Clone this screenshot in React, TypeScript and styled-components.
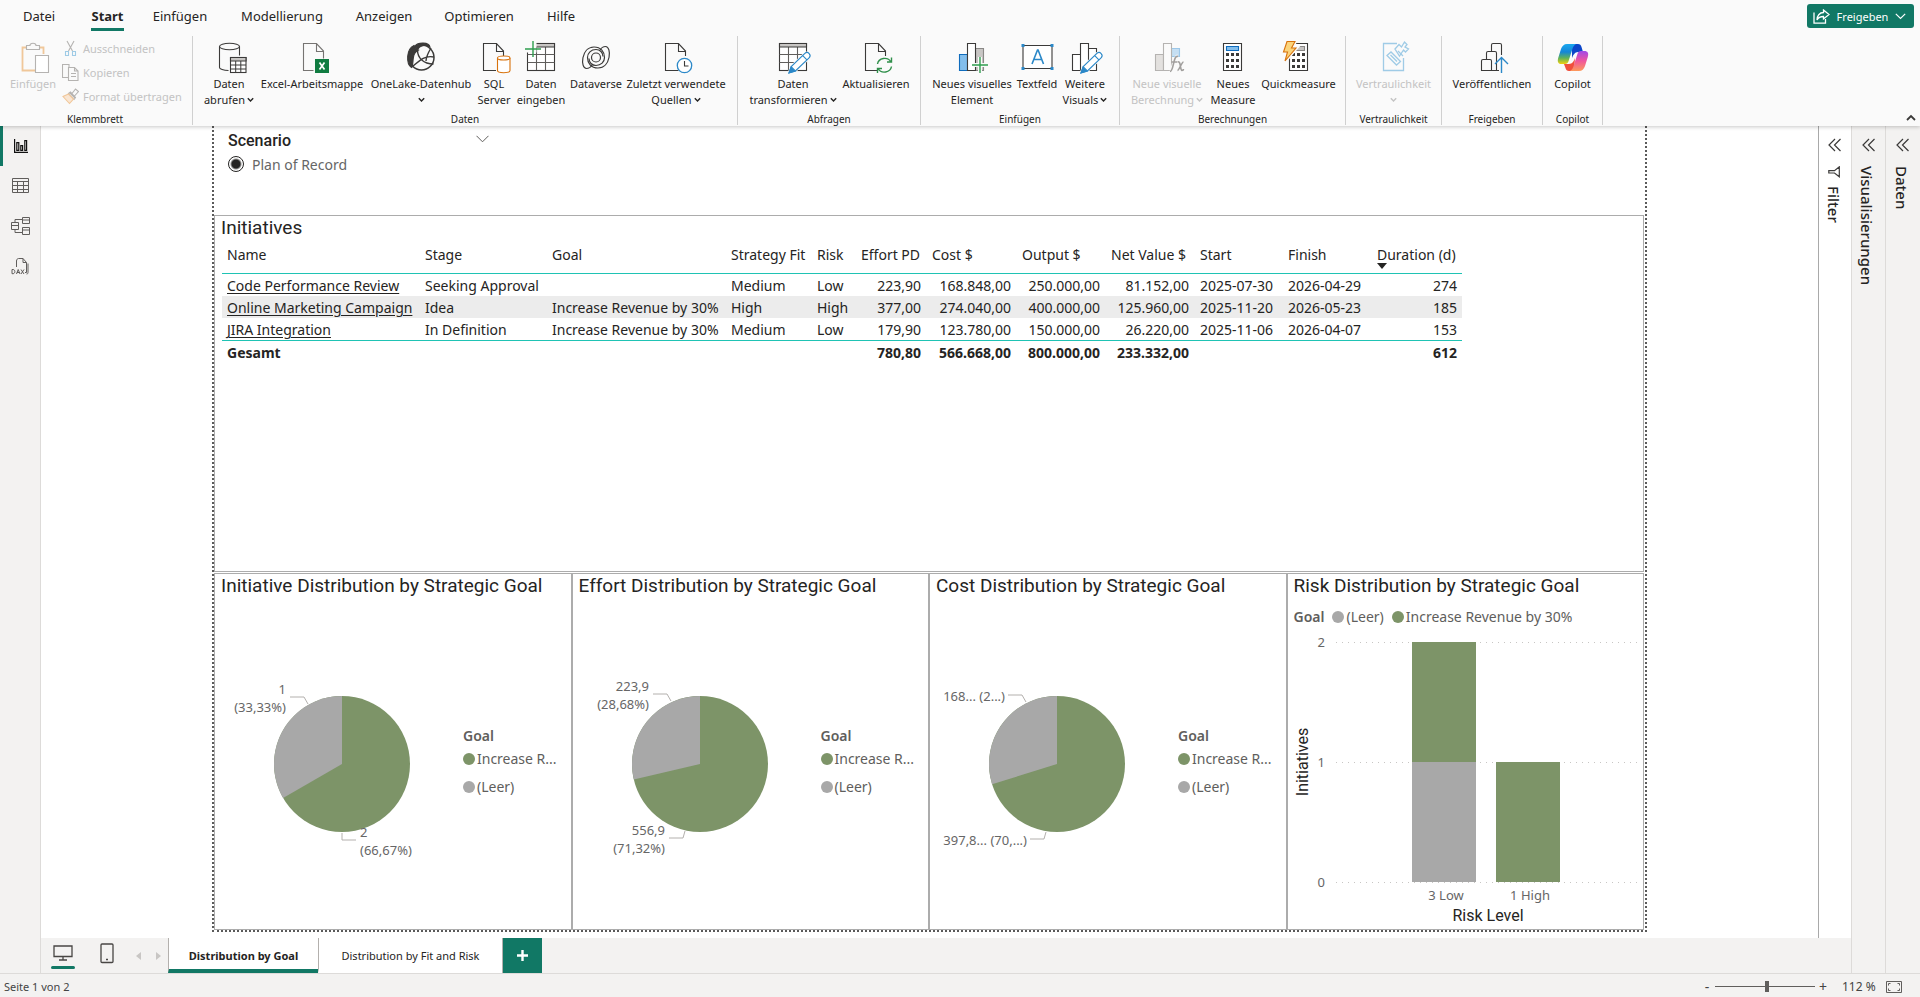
import React from "react";
import styled, { createGlobalStyle } from "styled-components";

const ui = `"Noto Sans", "Open Sans", sans-serif`;
const din = `Roboto, "Open Sans", sans-serif`;
const green = "#7d9468";
const gray = "#a8a8a8";
const brand = "#117865";

const GlobalStyle = createGlobalStyle`
  *, *::before, *::after { box-sizing: border-box; }
  html, body, #root { height: 100%; }
  body { margin: 0; font-family: ${ui}; font-size: 12px; color: #252423; background: #fff; }
  button { font: inherit; color: inherit; background: none; border: 0; padding: 0; margin: 0; cursor: pointer; }
  button:disabled { cursor: default; }
  h2 { margin: 0; }
`;

const Shell = styled.div`
  display: flex;
  flex-direction: column;
  height: 100%;
  overflow: hidden;
`;

/* ---------- ribbon ---------- */

const Ribbon = styled.header`
  position: relative;
  z-index: 2;
  flex: none;
  background: #fafafa;
  box-shadow: 0 1px 4px rgba(0, 0, 0, 0.22);
`;

const MenuRow = styled.div`
  display: flex;
  align-items: center;
  justify-content: space-between;
  height: 32px;
  padding: 0 6px 0 7px;
`;

const Menu = styled.nav`
  display: flex;
`;

const MenuItem = styled.button<{ $w: number; $active?: boolean }>`
  display: flex;
  justify-content: center;
  width: ${(p) => p.$w}px;
  height: 32px;
  padding-top: 7px;
  font-size: 13px;
  line-height: 18px;
  white-space: nowrap;
  font-weight: ${(p) => (p.$active ? 700 : 400)};

  span {
    height: 24px;
    border-bottom: 3px solid ${(p) => (p.$active ? brand : "transparent")};
  }
`;

const ShareButton = styled.button`
  display: flex;
  align-items: center;
  justify-content: space-between;
  width: 107px;
  height: 24px;
  padding: 0 8px 0 6px;
  border-radius: 3px;
  background: ${brand};
  color: #fff;
  font-size: 11px;
`;

const Groups = styled.div`
  display: flex;
  height: 94px;
  padding: 4px 0 1px;
`;

const Group = styled.section`
  display: flex;
  flex-direction: column;
  justify-content: space-between;
  padding: 0 8px;
  border-right: 1px solid #d0d0d0;
`;

const ClipGroup = styled(Group)`
  width: 193px;
  padding: 0 8px 0 6px;
`;

const GroupItems = styled.div`
  display: flex;
  padding-top: 6px;
`;

const GroupLabel = styled.div`
  font-size: 10px;
  line-height: 11px;
  text-align: center;
  white-space: nowrap;
`;

const Tool = styled.button<{ $w: number }>`
  display: flex;
  flex-direction: column;
  align-items: center;
  width: ${(p) => p.$w}px;
  height: 66px;
  font-size: 11px;
  line-height: 16px;
  white-space: nowrap;

  &:disabled {
    color: #c3c3c3;
  }

  & > svg {
    flex: none;
    width: 36px;
    height: 32px;
    margin-bottom: 2px;
    overflow: visible;
  }
`;

const ToolLine = styled.span`
  display: flex;
  align-items: center;
  gap: 2px;
  height: 16px;
`;

const ClipList = styled.div`
  display: flex;
  flex-direction: column;
  margin: -6px 0 0 2px;
`;

const ClipButton = styled.button`
  display: flex;
  align-items: center;
  gap: 4px;
  height: 24px;
  font-size: 11px;
  white-space: nowrap;

  &:disabled {
    color: #c3c3c3;
  }
`;

const Collapse = styled.button`
  display: flex;
  align-items: flex-end;
  margin: 0 4px 4px auto;
`;

/* ---------- body ---------- */

const Middle = styled.div`
  display: flex;
  flex: 1;
  min-height: 0;
`;

const Side = styled.nav`
  flex: none;
  width: 41px;
  background: #f3f2f1;
  border-right: 1px solid #dddbd9;
`;

const SideButton = styled.button<{ $active?: boolean }>`
  display: flex;
  align-items: center;
  justify-content: center;
  width: 40px;
  height: 40px;
  padding-right: 2px;
  border-left: 3px solid ${(p) => (p.$active ? brand : "transparent")};
`;

const Center = styled.div`
  display: flex;
  flex: 1;
  flex-direction: column;
  min-width: 0;
`;

const Work = styled.div`
  display: flex;
  flex: 1;
  min-height: 0;
`;

const Stage = styled.main`
  flex: 1;
  display: flex;
  min-width: 0;
  padding: 0 171px 6px;
`;

const Report = styled.div`
  flex: 1;
  display: flex;
  flex-direction: column;
  min-width: 0;
  border: 2px dotted #5a5a5a;
  border-top: 0;
`;

const Slicer = styled.fieldset`
  flex: none;
  width: 283px;
  height: 89px;
  margin: 0;
  padding: 4px 8px 0 14px;
  border: 0;
`;

const SlicerHead = styled.div`
  display: flex;
  align-items: center;
  justify-content: space-between;
  height: 20px;
  font-family: ${din};
  font-size: 16px;
  font-weight: 500;

  svg { margin-bottom: 2px; }
`;

const RadioLabel = styled.label`
  display: flex;
  align-items: center;
  gap: 8px;
  height: 28px;
  font-size: 14px;
  color: #666;

  input {
    appearance: none;
    width: 16px;
    height: 16px;
    margin: 0;
    border: 1px solid #252423;
    border-radius: 50%;
    background: radial-gradient(circle, #252423 0 4px, #fff 6px);
  }
`;

const Visual = styled.section`
  display: flex;
  flex-direction: column;
  min-width: 0;
  border: 1px solid #acacac;
`;

const TableVisual = styled(Visual)`
  flex: 1;
  margin: 0 1px 1px 0;
  min-height: 0;
`;

const Title = styled.h2`
  flex: none;
  padding-left: 6px;
  font-family: ${din};
  font-size: 19px;
  line-height: 24px;
  font-weight: 400;
  white-space: nowrap;
`;

const Table = styled.table`
  width: 1240px;
  margin-left: 7px;
  table-layout: fixed;
  border-collapse: separate;
  border-spacing: 0;
  font-size: 14px;
  line-height: 20px;
  white-space: nowrap;

  th, td { padding: 2px 5px 0 6px; height: 22px; text-align: left; font-weight: 400; }
  thead th { height: 34px; padding-top: 5px; vertical-align: top; border-bottom: 1px solid #1fc3b4; }
  tbody tr:nth-child(2) { background: #ececec; }
  tbody tr:last-child td { border-bottom: 1px solid #1fc3b4; height: 23px; }
  tfoot th, tfoot td { font-weight: 700; }
  th:first-child, td:first-child { padding-left: 5px; }
  a { color: inherit; text-underline-offset: 2px; }
  th:last-child { position: relative; text-align: right; padding-right: 7px; }
`;

const Num = styled.td`
  && { text-align: right; }
`;

const SortMark = styled.span`
  position: absolute;
  left: 6px;
  bottom: 4px;
  border: 5px solid transparent;
  border-top: 6px solid #252423;
  border-bottom: 0;
`;

const Charts = styled.div`
  flex: none;
  display: grid;
  grid-template-columns: repeat(4, 1fr);
  height: 357px;
  margin-right: 1px;
`;

const PieBody = styled.div`
  display: flex;
  flex: 1;
  align-items: center;
`;

const PieSvg = styled.svg`
  flex: none;
  width: 248px;
  height: 200px;

  text { font-size: 13px; fill: #666; font-family: ${ui}; }
`;

const PieLegend = styled.ul`
  flex: 1;
  min-width: 0;
  margin: 0;
  padding: 1px 8px 0 0;
  list-style: none;
  color: #605e5c;
  font-size: 14px;
  line-height: 18px;
`;

const LegendTitle = styled.li`
  font-weight: 600;
`;

const LegendItem = styled.li<{ $color: string }>`
  display: flex;
  align-items: center;
  gap: 2px;
  height: 28px;
  white-space: nowrap;

  &::before {
    content: "";
    flex: none;
    width: 12px;
    height: 12px;
    border-radius: 50%;
    background: ${(p) => p.$color};
  }
`;

const BarLegend = styled.ul`
  display: flex;
  align-items: center;
  gap: 8px;
  height: 28px;
  margin: 0 0 4px;
  padding: 9px 6px 0;
  list-style: none;
  color: #605e5c;
  font-size: 14px;
`;

const BarSvg = styled.svg`
  width: 355px;
  height: 298px;
  flex: none;

  text { font-family: ${ui}; font-size: 13px; fill: #666; }
  .axis { font-family: ${din}; font-size: 16px; fill: #252423; }
`;

/* ---------- panes ---------- */

const Pane = styled.aside<{ $w: number; $white?: boolean }>`
  flex: none;
  display: flex;
  flex-direction: column;
  align-items: center;
  width: ${(p) => p.$w}px;
  padding: 12px 1px 0 0;
  background: ${(p) => (p.$white ? "#fff" : "#f3f2f1")};
  border-left: 1px solid ${(p) => (p.$white ? "#a9a9a9" : "#dddbd9")};
`;

const PaneTitle = styled.span`
  display: flex;
  align-items: center;
  gap: 8px;
  margin: 14px 2px 0 0;
  writing-mode: vertical-rl;
  font-size: 15px;
  line-height: 20px;
  font-weight: 500;
`;

/* ---------- bottom ---------- */

const PageBar = styled.div`
  flex: none;
  display: flex;
  height: 35px;
  background: #f3f2f1;
`;

const LayoutButton = styled.button<{ $active?: boolean; $w: number }>`
  display: flex;
  flex-direction: column;
  align-items: center;
  justify-content: flex-end;
  gap: 2px;
  width: ${(p) => p.$w}px;
  padding-bottom: 4px;

  &::after {
    content: "";
    width: 24px;
    height: 3px;
    border-radius: 2px;
    background: ${(p) => (p.$active ? brand : "transparent")};
  }
`;

const Pager = styled.button`
  width: 20px;
  color: #c8c6c4;
`;

const PageTab = styled.button<{ $w: number; $active?: boolean }>`
  width: ${(p) => p.$w}px;
  background: #fff;
  border-left: 1px solid #b3b0ad;
  border-bottom: 4px solid ${(p) => (p.$active ? brand : "#fff")};
  font-size: 11px;
  font-weight: ${(p) => (p.$active ? 700 : 400)};
  padding-top: 4px;
`;

const AddPage = styled.button`
  display: flex;
  align-items: center;
  justify-content: center;
  width: 40px;
  background: ${brand};
  border-left: 1px solid #b3b0ad;
`;

const Status = styled.footer`
  flex: none;
  display: flex;
  align-items: center;
  justify-content: space-between;
  height: 24px;
  padding: 2px 18px 0 4px;
  background: #f3f2f1;
  border-top: 1px solid #dddbd9;
  font-size: 11px;
  color: #444;
`;

const ZoomBox = styled.div`
  display: flex;
  align-items: center;
  gap: 4px;
  font-size: 12px;

  button { width: 8px; font-size: 14px; line-height: 16px; }
  output { width: 34px; margin: 0 6px 0 11px; white-space: nowrap; }
`;

const ZoomRange = styled.input`
  appearance: none;
  width: 100px;
  height: 12px;
  margin: 0;
  background: linear-gradient(#605e5c, #605e5c) center / 100% 1px no-repeat;

  &::-webkit-slider-thumb {
    appearance: none;
    width: 4px;
    height: 11px;
    background: #605e5c;
  }
`;

/* ---------- icons ---------- */

const K = "#3b3a39";

const Chev = ({ color = "currentColor" }: { color?: string }) => (
  <svg width="7" height="6" viewBox="0 0 7 6" fill="none" stroke={color} strokeWidth="1.4">
    <path d="M.8 1.2 3.5 4 6.2 1.2" />
  </svg>
);

const BigIcon = ({ children }: { children: React.ReactNode }) => (
  <svg viewBox="0 0 36 32" fill="none" stroke={K} strokeWidth="1.1">
    {children}
  </svg>
);

const Doc = ({ x = 7.5 }: { x?: number }) => (
  <g transform={`translate(${x} 1.5)`}>
    <path d="M13 27H0V0h13l7 7.500v5M13 0v8h7" />
  </g>
);

const Pencil = () => (
  <g stroke="#2b88c8" transform="translate(14 31) rotate(-44)">
    <path fill="#fff" stroke="#fafafa" strokeWidth="2.500" d="M0 0 6-3h19a3 3 0 0 1 0 6H6z" />
    <path fill="#fff" d="M0 0 6-3h19a3 3 0 0 1 0 6H6zM22-3v6" />
    <path fill="#2b88c8" d="M0 0 6-3v6z" />
  </g>
);

const CalcKeys = ({ x }: { x: number }) => (
  <g fill={K} stroke="none">
    {[11, 17, 23].map((y) => [0, 5, 10].map((d) => <rect key={`${y}-${d}`} x={x + d} y={y} width="3" height="3" />))}
  </g>
);

const IcDatabase = () => (
  <BigIcon>
    <ellipse cx="18.500" cy="4.500" rx="10" ry="3.200" />
    <path d="M8.500 4.500v21c0 1.600 4 3 9 3M28.500 4.500v9" />
    <rect x="19.500" y="15.500" width="15.500" height="15" fill="#fff" />
    <path fill="#c8c6c4" d="M19.500 15.500H35v3.500H19.500z" />
    <path d="M24.700 19v11.500M29.800 19v11.500M19.500 23H35M19.500 27H35" strokeWidth="1" />
  </BigIcon>
);

const IcExcel = () => (
  <BigIcon>
    <g transform="translate(9.500 1.500)" stroke="#767472">
      <path d="M10 27H0V0h13l7 7.500V15M13 0v8h7" />
    </g>
    <path fill="#107c41" stroke="none" d="M21 17h14v14H21z" />
    <path d="m25.500 20.500 5 7M30.500 20.500l-5 7" stroke="#fff" strokeWidth="1.700" />
  </BigIcon>
);

const IcOneLake = () => (
  <BigIcon>
    <circle cx="18.500" cy="15.500" r="12.500" strokeWidth="1.500" />
    <path fill={K} d="M11 3.500C3 7 3 22 8.500 25.500 10.500 23 9.500 19 10.500 15c.5-4 3-6 5-7-2-1-3.500-2.500-4.500-4.500zM12 4c3-4 14-4 15 1-4-2-9-2-12 2-1-1-3-2-3-3z" />
    <path d="M14.500 8c0 8 6 14 16 14M28 6c-3 5-5 9-5 13M31 15c-9-2-14 3-22 10" strokeWidth="1.400" />
  </BigIcon>
);

const IcSql = () => (
  <BigIcon>
    <Doc />
    <g stroke="#d8720c">
      <path fill="#fff" stroke="#fafafa" strokeWidth="3" d="M21.500 16v14h12.500V16z" />
      <path fill="#fff" d="M21.500 16v12.500c0 3 12.500 3 12.500 0V16" />
      <ellipse cx="27.750" cy="16" rx="6.250" ry="2" fill="#fff" />
    </g>
  </BigIcon>
);

const GridTable = () => (
  <g>
    <rect x="4.500" y="1.500" width="27" height="27" fill="#fff" />
    <path d="M13.500 5v23M22.500 5v23M4.500 12.500h27M4.500 20.500h27" stroke="#605e5c" />
    <path fill="#c8c6c4" d="M4.500 1.500h27V5h-27z" />
  </g>
);

const IcEnter = () => (
  <BigIcon>
    <GridTable />
    <path stroke="none" fill="#fafafa" d="M2-1h11.500v11.500H2z" />
    <path stroke="#2f9e4f" strokeWidth="1.400" d="M10-1v16M2 7h16" />
  </BigIcon>
);

const dataverseArm = "M14 23c-1.500 2.500-3.500 3.500-5.500 3.500C2 26.500 3 5 16 5c7 0 10.500 5 10.500 10.500 0 4.500-3.500 8-8.500 8-4 0-7-3-7-7";

const IcDataverse = () => (
  <BigIcon>
    <g strokeWidth="1.200">
      <path d={dataverseArm} />
      <path d={dataverseArm} transform="rotate(180 18 15.500)" />
      <circle cx="18" cy="15.500" r="4.500" />
    </g>
  </BigIcon>
);

const IcRecent = () => (
  <BigIcon>
    <Doc />
    <circle cx="26.500" cy="23.500" r="7.200" fill="#fff" stroke="#2b88c8" strokeWidth="1.300" />
    <path d="M26.500 19v5h4" />
  </BigIcon>
);

const IcTransform = () => (
  <BigIcon>
    <GridTable />
    <Pencil />
  </BigIcon>
);

const IcRefresh = () => (
  <BigIcon>
    <Doc />
    <circle cx="26.500" cy="23.500" r="9" fill="#fafafa" stroke="none" />
    <path stroke="#2f8f4a" strokeWidth="1.400" d="M19.500 22c1-6 10-8 13.500-2M33.500 15.500V20H29M33.500 24.500c-1 6-10 8-13.500 2M19.500 31v-4.500H24" />
  </BigIcon>
);

const IcNewVisual = () => (
  <BigIcon>
    <path fill="#83beec" stroke="#0f6cbd" d="M5.500 12.500h8v16h-8z" />
    <path fill="#c8c6c4" stroke="#8a8886" d="M21.500 6.500h8v22h-8z" />
    <path fill="#fff" d="M13.500 1.500h8v27h-8z" />
    <path stroke="#fafafa" strokeWidth="4" d="M26 15v16M19 23h15" />
    <path stroke="#2f9e4f" strokeWidth="1.400" d="M26 15v16M18 23h16" />
  </BigIcon>
);

const IcTextbox = () => (
  <BigIcon>
    <path fill="#fff" d="M4 3.500h29v23H4z" />
    <path stroke="#2b88c8" strokeWidth="1.600" d="m13 22 5.500-14h.6L24.500 22M15 17.500h8" />
    <path fill="#2b88c8" stroke="none" d="M2.500 2h3v3h-3zM31.500 2h3v3h-3zM2.500 25h3v3h-3zM31.500 25h3v3h-3z" />
  </BigIcon>
);

const IcMoreVisuals = () => (
  <BigIcon>
    <path d="M5.500 12.500h8v16h-8zM13.500 1.500h8v27h-8zM21.500 6.500h8v22h-8z" fill="#fff" />
    <Pencil />
  </BigIcon>
);

const IcVisualCalc = () => (
  <BigIcon>
    <g stroke="#b5b3b1">
      <path fill="#e3e1df" d="M6.500 12.500h8v16h-8z" />
      <path fill="#c5dff3" stroke="#9cc7e8" d="M22.500 6.500h8v8h-8z" />
      <path fill="#fafafa" d="M22.500 14v14.500h-8v-27h8z" />
    </g>
    <path stroke="#fafafa" strokeWidth="4" d="M29 14c-5 2-4 14-8 18" />
    <path stroke="#a19f9d" strokeWidth="1.600" d="M29 14.500c-5-2-4 15-8 15M22.500 20h6M29 20c3-1 2 8 4 8.500 1 0 1.500-1 1.500-1.500M34.500 20c-2 0-4 8-6 8.500" />
  </BigIcon>
);

const IcMeasure = () => (
  <BigIcon>
    <path fill="#fff" d="M8.500 1.500h18v27h-18z" />
    <path fill="#83beec" stroke="#0f6cbd" d="M11.500 4.500h12v4h-12z" />
    <CalcKeys x={11} />
  </BigIcon>
);

const IcQuick = () => (
  <BigIcon>
    <path fill="#fff" d="M8.500 1.500h18v27h-18z" />
    <path fill="#c8c6c4" stroke="#8a8886" d="M12.500 4.500h11v4h-11z" />
    <CalcKeys x={11} />
    <path stroke="#fafafa" strokeWidth="4" d="M6-.5h8L10.500 6H15L4 19l2.500-9H2.500z" />
    <path fill="#fbd47b" stroke="#d8720c" d="M6-.5h8L10.500 6H15L4 19l2.500-9H2.500z" />
  </BigIcon>
);

const IcSensitivity = () => (
  <BigIcon>
    <g stroke="#9fcbe6" strokeWidth="1.300">
      <path d="M21 1.500H7.500v27h20V16" />
      <path d="m11 13.500 4-3.500 9.500 9.500-4 3.500zM14.500 13l6.500 6.500" />
      <path d="m19 7 4-4.500 2.500 2.500 3-5 2.500 2.500-2 2.500 3.500 2-3 3-2-2-4 6z" fill="#fafafa" />
      <path d="m22 9 5 5" />
    </g>
  </BigIcon>
);

const IcPublish = () => (
  <BigIcon>
    <path d="M17.500 9V3c0-1 .5-1.500 1.500-1.500h7c1 0 1.500.5 1.500 1.500v10M12.500 17v-6c0-1 .5-1.500 1.500-1.500h7c1 0 1.500.5 1.500 1.500v17.500M7.500 28.500V19c0-1 .5-1.500 1.500-1.500h7c1 0 1.500.5 1.500 1.500v9.500zM17.500 28.500H25" />
    <path stroke="#fafafa" strokeWidth="4" d="M27.500 17v14" />
    <path stroke="#2b88c8" strokeWidth="1.400" d="M27.500 31V16M21 22l6.500-6.500L34 22" />
  </BigIcon>
);

const IcCopilot = () => (
  <svg viewBox="0 0 36 32">
    <defs>
      <linearGradient id="cpA" x1="0" y1="0" x2="0" y2="1">
        <stop offset="0" stopColor="#1aa7ee" />
        <stop offset=".4" stopColor="#1486d8" />
        <stop offset=".7" stopColor="#5fb25a" />
        <stop offset="1" stopColor="#f2d00d" />
      </linearGradient>
      <linearGradient id="cpB" x1="0" y1="0" x2="0" y2="1">
        <stop offset="0" stopColor="#a048e8" />
        <stop offset=".5" stopColor="#f0569c" />
        <stop offset="1" stopColor="#fd9a5a" />
      </linearGradient>
    </defs>
    <path fill="#0c46c9" d="M17 2h6c2 0 3 1 3.500 3l1.500 5h-5c-3 0-5 3-6 6z" />
    <path fill="#f04f3c" d="M19 29h-5c-2 0-3-1-3.500-3L9 22h5c3 0 5-3 6-6z" />
    <path fill="url(#cpA)" d="M12 2h9c-2 1-3 3-3.600 5l-3.800 12c-.6 2-1.600 3-3.600 3H6.500c-3 0-4.500-2-3.300-6L6 7c1-3 3-5 6-5z" />
    <path fill="url(#cpB)" d="M24 29h-9c2-1 3-3 3.600-5l3.800-12c.6-2 1.600-3 3.600-3h3.500c3 0 4.500 2 3.300 6L30 24c-1 3-3 5-6 5z" />
  </svg>
);

const IcPaste = () => (
  <BigIcon>
    <path d="M11 5.500H7.500v23H20" stroke="#f0c79a" strokeWidth="1.800" />
    <path d="M25 5.500h3.500V12" stroke="#f0c79a" strokeWidth="1.800" />
    <path stroke="#b5b3b1" d="M11.500 7.500v-4H15c0-3 6-3 6 0h3.500v4z" />
    <path stroke="#b5b3b1" fill="#fff" d="M20.500 13.500h13v17h-13z" />
  </BigIcon>
);

const small = { width: 17, height: 17, viewBox: "0 0 17 17", fill: "none", stroke: "#b5b3b1", strokeWidth: 1.1 };

const DoubleChevron = () => (
  <svg width="13" height="14" viewBox="0 0 13 14" fill="none" stroke="#3b3a39" strokeWidth="1.200">
    <path d="M7 1 1 7l6 6M12.500 1l-6 6 6 6" />
  </svg>
);

/* ---------- data ---------- */

type ToolDef = { w: number; icon: React.ReactNode; lines: string[]; menu?: boolean; off?: boolean };

const groups: { label: string; tools: ToolDef[] }[] = [
  {
    label: "Daten",
    tools: [
      { w: 56, icon: <IcDatabase />, lines: ["Daten", "abrufen"], menu: true },
      { w: 110, icon: <IcExcel />, lines: ["Excel-Arbeitsmappe"] },
      { w: 108, icon: <IcOneLake />, lines: ["OneLake-Datenhub", ""], menu: true },
      { w: 38, icon: <IcSql />, lines: ["SQL", "Server"] },
      { w: 56, icon: <IcEnter />, lines: ["Daten", "eingeben"] },
      { w: 54, icon: <IcDataverse />, lines: ["Dataverse"] },
      { w: 106, icon: <IcRecent />, lines: ["Zuletzt verwendete", "Quellen"], menu: true },
    ],
  },
  {
    label: "Abfragen",
    tools: [
      { w: 94, icon: <IcTransform />, lines: ["Daten", "transformieren"], menu: true },
      { w: 72, icon: <IcRefresh />, lines: ["Aktualisieren"] },
    ],
  },
  {
    label: "Einfügen",
    tools: [
      { w: 86, icon: <IcNewVisual />, lines: ["Neues visuelles", "Element"] },
      { w: 44, icon: <IcTextbox />, lines: ["Textfeld"] },
      { w: 52, icon: <IcMoreVisuals />, lines: ["Weitere", "Visuals"], menu: true },
    ],
  },
  {
    label: "Berechnungen",
    tools: [
      { w: 78, icon: <IcVisualCalc />, lines: ["Neue visuelle", "Berechnung"], menu: true, off: true },
      { w: 54, icon: <IcMeasure />, lines: ["Neues", "Measure"] },
      { w: 77, icon: <IcQuick />, lines: ["Quickmeasure"] },
    ],
  },
  { label: "Vertraulichkeit", tools: [{ w: 79, icon: <IcSensitivity />, lines: ["Vertraulichkeit", ""], menu: true, off: true }] },
  { label: "Freigeben", tools: [{ w: 84, icon: <IcPublish />, lines: ["Veröffentlichen"] }] },
  { label: "Copilot", tools: [{ w: 43, icon: <IcCopilot />, lines: ["Copilot"] }] },
];

const menu: [string, number][] = [
  ["Datei", 64],
  ["Start", 73],
  ["Einfügen", 72],
  ["Modellierung", 132],
  ["Anzeigen", 72],
  ["Optimieren", 118],
  ["Hilfe", 46],
];

const columns = [197, 127, 179, 86, 44, 71, 90, 89, 89, 88, 89, 91];
const heads = ["Name", "Stage", "Goal", "Strategy Fit", "Risk", "Effort PD", "Cost $", "Output $", "Net Value $", "Start", "Finish"];
const rows = [
  ["Code Performance Review", "Seeking Approval", "", "Medium", "Low", "223,90", "168.848,00", "250.000,00", "81.152,00", "2025-07-30", "2026-04-29", "274"],
  ["Online Marketing Campaign", "Idea", "Increase Revenue by 30%", "High", "High", "377,00", "274.040,00", "400.000,00", "125.960,00", "2025-11-20", "2026-05-23", "185"],
  ["JIRA Integration", "In Definition", "Increase Revenue by 30%", "Medium", "Low", "179,90", "123.780,00", "150.000,00", "26.220,00", "2025-11-06", "2026-04-07", "153"],
];
const totals = ["", "", "", "", "780,80", "566.668,00", "800.000,00", "233.332,00", "", "", "612"];
const numeric = new Set([5, 6, 7, 8, 11]);

type Label = { x: number; y: number; end?: boolean; text: string };
type PieDef = { title: string; share: number; labels: Label[]; leaders: string[] };

const pies: PieDef[] = [
  {
    title: "Initiative Distribution by Strategic Goal",
    share: 0.3333,
    labels: [
      { x: 71, y: 30, end: true, text: "1" },
      { x: 71, y: 48, end: true, text: "(33,33%)" },
      { x: 145, y: 173, text: "2" },
      { x: 145, y: 191, text: "(66,67%)" },
    ],
    leaders: ["M75 33h14l4 7", "M127 169v7h14"],
  },
  {
    title: "Effort Distribution by Strategic Goal",
    share: 0.2868,
    labels: [
      { x: 76, y: 27, end: true, text: "223,9" },
      { x: 76, y: 45, end: true, text: "(28,68%)" },
      { x: 92, y: 171, end: true, text: "556,9" },
      { x: 92, y: 189, end: true, text: "(71,32%)" },
    ],
    leaders: ["M80 30h14l4 7", "M96 174h14l2-7"],
  },
  {
    title: "Cost Distribution by Strategic Goal",
    share: 0.298,
    labels: [
      { x: 75, y: 37, end: true, text: "168... (2...)" },
      { x: 97, y: 181, end: true, text: "397,8... (70,...)" },
    ],
    leaders: ["M78 31h14l4 7", "M100 175h14l2-7"],
  },
];

const PieChart = ({ share, labels, leaders }: PieDef) => {
  const cx = 127;
  const cy = 100;
  const r = 68;
  const a = -share * 2 * Math.PI;
  const x = cx + r * Math.sin(a);
  const y = cy - r * Math.cos(a);
  return (
    <PieSvg viewBox="0 0 248 200" role="img">
      <circle cx={cx} cy={cy} r={r} fill={green} />
      <path fill={gray} d={`M${cx} ${cy}V${cy - r}A${r} ${r} 0 0 0 ${x} ${y}z`} />
      {leaders.map((d) => (
        <path key={d} d={d} fill="none" stroke="#b3b0ad" />
      ))}
      {labels.map((l) => (
        <text key={l.text} x={l.x} y={l.y} textAnchor={l.end ? "end" : "start"}>
          {l.text}
        </text>
      ))}
    </PieSvg>
  );
};

const BarChart = () => (
  <BarSvg viewBox="0 0 355 298" role="img">
    {[12, 132, 252].map((y, i) => (
      <g key={y}>
        <path d={`M48 ${y}.5h303`} stroke="#c8c6c4" strokeDasharray="1 5" />
        <text x="37" y={y + 5} textAnchor="end">
          {2 - i}
        </text>
      </g>
    ))}
    <path fill={green} d="M124 12h64v120h-64zM208 132h64v120h-64z" />
    <path fill={gray} d="M124 132h64v120h-64z" />
    <text x="158" y="270" textAnchor="middle">3 Low</text>
    <text x="242" y="270" textAnchor="middle">1 High</text>
    <text className="axis" x="200" y="291" textAnchor="middle">Risk Level</text>
    <text className="axis" transform="translate(20 132) rotate(-90)" textAnchor="middle">Initiatives</text>
  </BarSvg>
);

export default function App() {
  return (
    <Shell>
      <GlobalStyle />
      <Ribbon>
        <MenuRow>
          <Menu>
            {menu.map(([name, w]) => (
              <MenuItem key={name} $w={w} $active={name === "Start"}>
                <span>{name}</span>
              </MenuItem>
            ))}
          </Menu>
          <ShareButton>
            <svg width="17" height="15" viewBox="0 0 17 15" fill="none" stroke="#fff" strokeWidth="1.300">
              <path d="M1 3.500v10.700h11.500V10M10.500 1l5.500 4.500-5.500 4.500V7.500C7 7.500 5 9 4 11c0-4 2.500-7.500 6.500-7.500z" />
            </svg>
            Freigeben
            <svg width="11" height="7" viewBox="0 0 11 7" fill="none" stroke="#fff" strokeWidth="1.200">
              <path d="m.8.8 4.700 4.700L10.200.8" />
            </svg>
          </ShareButton>
        </MenuRow>
        <Groups>
          <ClipGroup>
            <GroupItems>
              <Tool $w={54} disabled>
                <IcPaste />
                <ToolLine>Einfügen</ToolLine>
              </Tool>
              <ClipList>
                <ClipButton disabled>
                  <svg {...small}>
                    <path d="M5 1l5.500 10M12 1 6.500 11" />
                    <path stroke="#9fcbe6" d="M3.500 11.500h3v4h-3zM10.500 11.500h3v4h-3z" />
                  </svg>
                  Ausschneiden
                </ClipButton>
                <ClipButton disabled>
                  <svg {...small}>
                    <path d="M6 13.500H.5V.5H7v2.500M6.500 3.500h6l3.500 3.500v9.500H6.500zM12.500 3.500V7H16M9 9.500h5M9 12.500h5" />
                  </svg>
                  Kopieren
                </ClipButton>
                <ClipButton disabled>
                  <svg {...small}>
                    <path d="m8 5 5 5M10 5.500 13.500 1l3 2.500L12.500 8M6.500 5.500l2-1.500 5 5.500-1.500 2z" />
                    <path stroke="#f0c79a" fill="#fae6d2" d="M6.500 6 1 8.500l6.500 7 4-4.500z" />
                  </svg>
                  Format übertragen
                </ClipButton>
              </ClipList>
            </GroupItems>
            <GroupLabel>Klemmbrett</GroupLabel>
          </ClipGroup>
          {groups.map((g) => (
            <Group key={g.label}>
              <GroupItems>
                {g.tools.map((t) => (
                  <Tool key={t.lines[0] + t.lines[1]} $w={t.w} disabled={t.off}>
                    {t.icon}
                    {t.lines.map((line, i) => (
                      <ToolLine key={i}>
                        {line}
                        {t.menu && i === t.lines.length - 1 && <Chev />}
                      </ToolLine>
                    ))}
                  </Tool>
                ))}
              </GroupItems>
              <GroupLabel>{g.label}</GroupLabel>
            </Group>
          ))}
          <Collapse aria-label="Menüband reduzieren">
            <svg width="10" height="7" viewBox="0 0 10 7" fill="none" stroke={K} strokeWidth="1.800">
              <path d="m1 6 4-4 4 4" />
            </svg>
          </Collapse>
        </Groups>
      </Ribbon>

      <Middle>
        <Side>
          <SideButton $active aria-label="Berichtsansicht">
            <svg width="14" height="14" viewBox="0 0 14 14" fill="none" stroke="#111" strokeWidth="1.200">
              <path d="M.6 0v13.400H14M2.800 3.600h2v7.800h-2zM6.800 6.600h1.800v4.800H6.800zM10.800 1.600h1.800v9.800h-1.800z" />
            </svg>
          </SideButton>
          <SideButton aria-label="Tabellenansicht">
            <svg width="17" height="16" viewBox="0 0 17 16" fill="none" stroke="#605e5c">
              <path d="M.5.5h16v14H.5zM.5 3.500h16M.5 7.500h16M.5 11.500h16M5.500 3.500v11M11.500 3.500v11" />
            </svg>
          </SideButton>
          <SideButton aria-label="Modellansicht">
            <svg width="19" height="18" viewBox="0 0 19 18" fill="none" stroke="#605e5c">
              <path d="M.5 5.500h7v7h-7zM.5 8.500h7M11.500.5h7v6h-7zM11.500 3h7M11.500 10.500h7v7h-7zM11.500 13h7M4 5.500v-3h7.500M4 12.500v3h7.500" />
            </svg>
          </SideButton>
          <SideButton aria-label="DAX-Abfrageansicht">
            <svg width="19" height="17" viewBox="0 0 19 17" fill="none" stroke="#605e5c">
              <path d="M5.500 9V3c0-1.500 1-2.500 2-2.500h4.500l3.500 4v10H14M12 .5v4h3.500M17 5.500v9c0 1-.5 1.500-1.500 1.500" />
              <path d="M1 11.500v4.200h1c2.500 0 2.500-4.200 0-4.200zM5.500 16l1.700-4.500L9 16M6 14.500h2.500M10 11.500l3 4.500M13 11.500 10 16" />
            </svg>
          </SideButton>
        </Side>

        <Center>
          <Work>
            <Stage>
              <Report>
                <Slicer>
                  <SlicerHead>
                    Scenario
                    <svg width="13" height="8" viewBox="0 0 13 8" fill="none" stroke="#605e5c">
                      <path d="m.5.800 6 6 6-6" />
                    </svg>
                  </SlicerHead>
                  <RadioLabel>
                    <input type="radio" name="scenario" defaultChecked />
                    Plan of Record
                  </RadioLabel>
                </Slicer>

                <TableVisual>
                  <Title>Initiatives</Title>
                  <Table>
                    <colgroup>
                      {columns.map((w, i) => (
                        <col key={i} width={w} />
                      ))}
                    </colgroup>
                    <thead>
                      <tr>
                        {heads.map((h) => (
                          <th key={h}>{h}</th>
                        ))}
                        <th>
                          Duration (d)
                          <SortMark />
                        </th>
                      </tr>
                    </thead>
                    <tbody>
                      {rows.map((r) => (
                        <tr key={r[0]}>
                          {r.map((c, i) =>
                            numeric.has(i) ? (
                              <Num key={i}>{c}</Num>
                            ) : (
                              <td key={i}>{i === 0 ? <a href="#initiative">{c}</a> : c}</td>
                            )
                          )}
                        </tr>
                      ))}
                    </tbody>
                    <tfoot>
                      <tr>
                        <th>Gesamt</th>
                        {totals.map((c, i) => (
                          <Num key={i}>{c}</Num>
                        ))}
                      </tr>
                    </tfoot>
                  </Table>
                </TableVisual>

                <Charts>
                  {pies.map((p) => (
                    <Visual key={p.title}>
                      <Title>{p.title}</Title>
                      <PieBody>
                        <PieChart {...p} />
                        <PieLegend>
                          <LegendTitle>Goal</LegendTitle>
                          <LegendItem $color={green}>Increase R...</LegendItem>
                          <LegendItem $color={gray}>(Leer)</LegendItem>
                        </PieLegend>
                      </PieBody>
                    </Visual>
                  ))}
                  <Visual>
                    <Title>Risk Distribution by Strategic Goal</Title>
                    <BarLegend>
                      <LegendTitle>Goal</LegendTitle>
                      <LegendItem $color={gray}>(Leer)</LegendItem>
                      <LegendItem $color={green}>Increase Revenue by 30%</LegendItem>
                    </BarLegend>
                    <BarChart />
                  </Visual>
                </Charts>
              </Report>
            </Stage>
            <Pane $w={33} $white>
              <DoubleChevron />
              <PaneTitle>
                <svg width="12" height="12" viewBox="0 0 12 12" fill="none" stroke={K} strokeWidth="1.200">
                  <path d="M11.300.8v10L6.500 7H.8V4.700h5.700z" />
                </svg>
                Filter
              </PaneTitle>
            </Pane>
          </Work>
          <PageBar>
            <LayoutButton $w={44} $active aria-label="Desktoplayout">
              <svg width="20" height="21" viewBox="0 0 20 21" fill="none" stroke="#484644" strokeWidth="1.300">
                <path d="M1 3h18v10.500H1zM10 13.500V17M6 17h8" />
              </svg>
            </LayoutButton>
            <LayoutButton $w={43} aria-label="Mobiles Layout">
              <svg width="14" height="21" viewBox="0 0 14 21" fill="none" stroke="#484644" strokeWidth="1.300">
                <rect x="1" y="1" width="12" height="18.500" rx="1" />
                <path d="M6 16.500h2" />
              </svg>
            </LayoutButton>
            <Pager aria-label="Vorherige Seite">
              <svg width="5" height="8" viewBox="0 0 5 8" fill="currentColor"><path d="M5 0v8L0 4z" /></svg>
            </Pager>
            <Pager aria-label="Nächste Seite">
              <svg width="5" height="8" viewBox="0 0 5 8" fill="currentColor"><path d="M0 0v8l5-4z" /></svg>
            </Pager>
            <PageTab $w={150} $active>Distribution by Goal</PageTab>
            <PageTab $w={184}>Distribution by Fit and Risk</PageTab>
            <AddPage aria-label="Neue Seite">
              <svg width="11" height="11" viewBox="0 0 11 11" stroke="#fff" strokeWidth="2.400">
                <path d="M5.500 0v11M0 5.500h11" />
              </svg>
            </AddPage>
          </PageBar>
        </Center>

        <Pane $w={34}>
          <DoubleChevron />
          <PaneTitle>Visualisierungen</PaneTitle>
        </Pane>
        <Pane $w={35}>
          <DoubleChevron />
          <PaneTitle>Daten</PaneTitle>
        </Pane>
      </Middle>

      <Status>
        <span>Seite 1 von 2</span>
        <ZoomBox>
          <button aria-label="Verkleinern">-</button>
          <ZoomRange type="range" min={0} max={100} defaultValue={52} aria-label="Zoom" />
          <button aria-label="Vergrößern">+</button>
          <output>112 %</output>
          <svg width="16" height="12" viewBox="0 0 16 12" fill="none" stroke="#605e5c">
            <path d="M.5.500h15v11H.5zM2.500 4.500v-2h2M11.500 2.500h2v2M13.500 7.500v2h-2M4.500 9.500h-2v-2" />
          </svg>
        </ZoomBox>
      </Status>
    </Shell>
  );
}
